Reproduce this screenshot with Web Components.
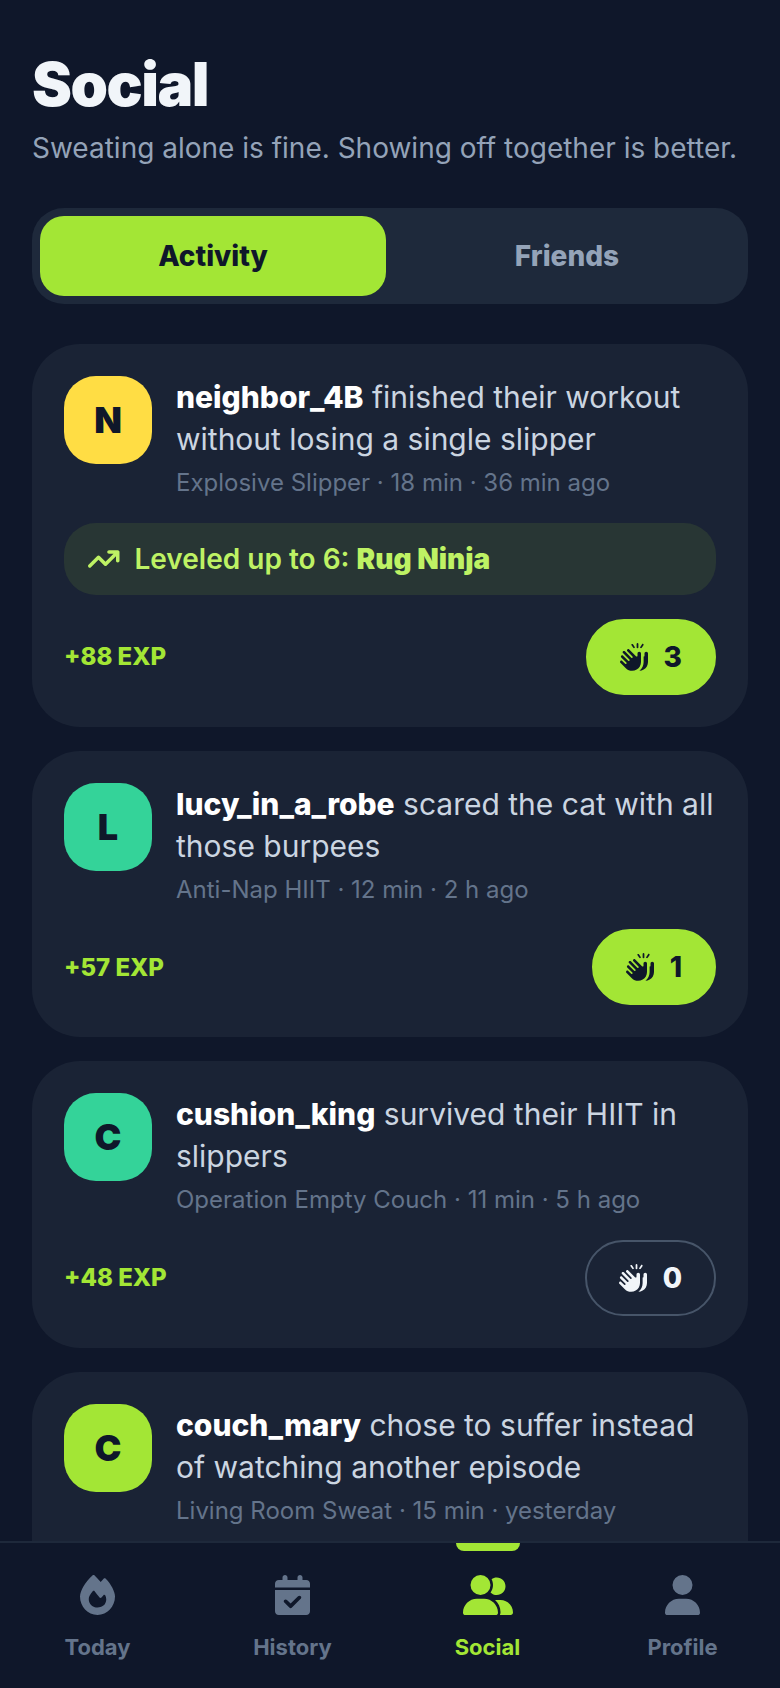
<!DOCTYPE html>
<html lang="en">
<head>
<meta charset="utf-8">
<title>Social</title>
<style>
  html, body { margin: 0; padding: 0; background: #0f172a; }
  body { font-family: Inter, "Liberation Sans", sans-serif; }
</style>
</head>
<body>
<app-shell>
  <page-header title="Social">Sweating alone is fine. Showing off together is better.</page-header>
  <seg-tabs></seg-tabs>
  <activity-card initial="N" tone="#ffdd44" exp="+88 EXP" claps="3" meta="Explosive Slipper · 18 min · 36 min ago">
    <b>neighbor_4B</b> finished their workout without losing a single slipper
    <level-badge slot="extra">Leveled up to 6: <b>Rug Ninja</b></level-badge>
  </activity-card>
  <activity-card initial="L" tone="#34d399" exp="+57 EXP" claps="1" meta="Anti-Nap HIIT · 12 min · 2 h ago">
    <b>lucy_in_a_robe</b> scared the cat with all those burpees
  </activity-card>
  <activity-card initial="C" tone="#34d399" exp="+48 EXP" claps="0" meta="Operation Empty Couch · 11 min · 5 h ago">
    <b>cushion_king</b> survived their HIIT in slippers
  </activity-card>
  <activity-card initial="C" tone="#a3e635" exp="+35 EXP" claps="0" meta="Living Room Sweat · 15 min · yesterday">
    <b>couch_mary</b> chose to suffer instead of watching another episode
  </activity-card>
  <bottom-nav slot="nav"></bottom-nav>
</app-shell>

<script>
const icons = {
  fire: ['0 0 448 512', 'M159.3 5.4c7.8-7.3 19.9-7.2 27.7 .1c27.6 25.9 53.5 53.8 77.7 84c11-14.4 23.5-30.1 37-42.9c7.9-7.4 20.1-7.4 28 .1c34.6 33 63.9 76.6 84.5 118c20.3 40.8 33.8 82.5 33.8 111.9C448 404.2 348.2 512 224 512C98.4 512 0 404.1 0 276.5c0-38.4 17.8-85.3 45.4-131.7C73.3 97.7 112.7 48.6 159.3 5.4zM225.7 416c25.3 0 47.7-7 68.8-21c42.1-29.4 53.4-88.2 28.1-134.4c-4.5-9-16-9.6-22.5-2l-25.2 29.3c-6.6 7.6-18.5 7.4-24.7-.5c-16.5-21-46-58.5-62.8-79.8c-6.3-8-18.3-8.1-24.7-.1c-33.8 42.5-50.8 69.3-50.8 99.4C112 375.4 162.6 416 225.7 416z'],
  calendar: ['0 0 448 512', 'M128 0c17.7 0 32 14.3 32 32V64H288V32c0-17.7 14.3-32 32-32s32 14.3 32 32V64h48c26.5 0 48 21.5 48 48v48H0V112C0 85.5 21.5 64 48 64H96V32c0-17.7 14.3-32 32-32zM0 192H448V464c0 26.5-21.5 48-48 48H48c-26.5 0-48-21.5-48-48V192zM329 305c9.4-9.4 9.4-24.6 0-33.9s-24.6-9.4-33.9 0l-95 95-47-47c-9.4-9.4-24.6-9.4-33.9 0s-9.4 24.6 0 33.9l64 64c9.4 9.4 24.6 9.4 33.9 0L329 305z'],
  group: ['0 0 640 512', 'M96 128a128 128 0 1 1 256 0A128 128 0 1 1 96 128zM0 482.3C0 383.8 79.8 304 178.3 304h91.4C368.2 304 448 383.8 448 482.3c0 16.4-13.3 29.7-29.7 29.7H29.7C13.3 512 0 498.7 0 482.3zM609.3 512H471.4c5.4-9.4 8.6-20.3 8.6-32v-8c0-60.7-27.1-115.2-69.8-151.8c2.4-.1 4.7-.2 7.1-.2h61.4C567.8 320 640 392.2 640 481.3c0 17-13.8 30.7-30.7 30.7zM432 256c-31 0-59-12.6-79.3-32.9C372.4 196.5 384 163.6 384 128c0-26.8-6.6-52.1-18.3-74.3C384.3 40.1 407.2 32 432 32c61.9 0 112 50.1 112 112s-50.1 112-112 112z'],
  user: ['0 0 448 512', 'M224 256A128 128 0 1 0 224 0a128 128 0 1 0 0 256zm-45.7 48C79.8 304 0 383.8 0 482.3C0 498.7 13.3 512 29.7 512H418.3c16.4 0 29.7-13.3 29.7-29.7C448 383.8 368.2 304 269.7 304H178.3z'],
  trend: ['0 0 576 512', 'M384 160c-17.7 0-32-14.3-32-32s14.3-32 32-32H544c17.7 0 32 14.3 32 32V288c0 17.7-14.3 32-32 32s-32-14.3-32-32V205.3L342.6 374.6c-12.5 12.5-32.8 12.5-45.3 0L192 269.3 54.6 406.6c-12.5 12.5-32.8 12.5-45.3 0s-12.5-32.8 0-45.3l160-160c12.5-12.5 32.8-12.5 45.3 0L320 306.7 466.7 160H384z'],
  clap: ['0 0 512 512', 'M336 16V80c0 8.8-7.2 16-16 16s-16-7.2-16-16V16c0-8.8 7.2-16 16-16s16 7.2 16 16zm-98.7 7.1l32 48c4.9 7.4 2.9 17.3-4.4 22.2s-17.3 2.9-22.2-4.4l-32-48c-4.9-7.4-2.9-17.3 4.4-22.2s17.3-2.9 22.2 4.4zM135 119c9.4-9.4 24.6-9.4 33.9 0L292.7 242.7c10.1 10.1 27.3 2.9 27.3-11.3V192c0-17.7 14.3-32 32-32s32 14.3 32 32V345.6c0 57.1-30 110-78.9 139.4c-64 38.4-145.8 28.3-198.5-24.4L7 361c-9.4-9.4-9.4-24.6 0-33.9s24.6-9.4 33.9 0l53 53c6.1 6.1 16 6.1 22.1 0s6.1-16 0-22.1L23 265c-9.4-9.4-9.4-24.6 0-33.9s24.6-9.4 33.9 0l93 93c6.1 6.1 16 6.1 22.1 0s6.1-16 0-22.1L55 185c-9.4-9.4-9.4-24.6 0-33.9s24.6-9.4 33.9 0l117 117c6.1 6.1 16 6.1 22.1 0s6.1-16 0-22.1l-93-93c-9.4-9.4-9.4-24.6 0-33.9zM433.1 484.9c-24.2 14.5-50.9 22.1-77.7 23.1c48.1-39.6 76.6-99 76.6-162.4l0-98.1c8.2-.1 16-6.4 16-16V192c0-17.7 14.3-32 32-32s32 14.3 32 32V345.6c0 57.1-30 110-78.9 139.4zM424.9 18.7c7.4 4.9 9.3 14.8 4.4 22.2l-32 48c-4.9 7.4-14.8 9.3-22.2 4.4s-9.3-14.8-4.4-22.2l32-48c4.9-7.4 14.8-9.3 22.2-4.4z'],
};

const icon = (name, height) => {
  const [box, d] = icons[name];
  return `<svg viewBox="${box}" height="${height}" fill="currentColor" aria-hidden="true"><path d="${d}"/></svg>`;
};

class AppShell extends HTMLElement {
  constructor() {
    super();
    this.attachShadow({ mode: 'open' }).innerHTML = `
      <style>
        :host {
          display: flex;
          flex-direction: column;
          width: 780px;
          height: 1688px;
          overflow: hidden;
          background: #0f172a;
        }
        main {
          flex: 1;
          min-height: 0;
          overflow: hidden;
          padding: 48px 32px 0;
          display: flex;
          flex-direction: column;
          gap: 24px;
        }
        ::slotted(seg-tabs) { margin: 16px 0; }
      </style>
      <main><slot></slot></main>
      <slot name="nav"></slot>
    `;
  }
}

class PageHeader extends HTMLElement {
  constructor() {
    super();
    this.attachShadow({ mode: 'open' }).innerHTML = `
      <style>
        :host { display: block; flex: none; }
        h1 {
          margin: 0 0 8px;
          font: 900 60px/72px Inter, sans-serif;
          letter-spacing: -1.5px;
          color: #f1f5f9;
        }
        p {
          margin: 0;
          font: 400 28px/40px Inter, sans-serif;
          color: #94a3b8;
          white-space: nowrap;
        }
      </style>
      <h1>${this.getAttribute('title')}</h1>
      <p><slot></slot></p>
    `;
  }
}

class SegTabs extends HTMLElement {
  constructor() {
    super();
    this.attachShadow({ mode: 'open' }).innerHTML = `
      <style>
        :host {
          display: grid;
          grid-template-columns: 1fr 1fr;
          gap: 8px;
          flex: none;
          height: 96px;
          box-sizing: border-box;
          padding: 8px;
          background: #1e293b;
          border-radius: 32px;
        }
        div {
          display: flex;
          align-items: center;
          justify-content: center;
          border-radius: 24px;
          font: 800 28px Inter, sans-serif;
          color: #94a3b8;
        }
        .on { background: #a3e635; color: #0f172a; }
      </style>
      <div class="on">Activity</div>
      <div>Friends</div>
    `;
  }
}

class LevelBadge extends HTMLElement {
  constructor() {
    super();
    this.attachShadow({ mode: 'open' }).innerHTML = `
      <style>
        :host {
          display: flex;
          align-items: center;
          gap: 15px;
          height: 72px;
          box-sizing: border-box;
          padding: 0 24px;
          border-radius: 32px;
          background: rgba(163, 230, 53, 0.1);
          color: #bef264;
          font: 600 28px Inter, sans-serif;
        }
        svg { flex: none; }
        ::slotted(b) { font-weight: 900; }
      </style>
      ${icon('trend', 28)}
      <span><slot></slot></span>
    `;
  }
}

class ClapButton extends HTMLElement {
  constructor() {
    super();
    const count = this.getAttribute('count');
    this.attachShadow({ mode: 'open' }).innerHTML = `
      <style>
        :host {
          display: inline-flex;
          align-items: center;
          gap: 16px;
          height: 76px;
          box-sizing: border-box;
          padding: 0 32px;
          border: 2px solid #a3e635;
          border-radius: 38px;
          font: 800 28px Inter, sans-serif;
          background: #a3e635;
          color: #0f172a;
        }
        :host([count="0"]) {
          background: transparent;
          border-color: #475569;
          color: #f1f5f9;
        }
      </style>
      ${icon('clap', 28)}
      <span>${count}</span>
    `;
  }
}

class ActivityCard extends HTMLElement {
  constructor() {
    super();
    this.attachShadow({ mode: 'open' }).innerHTML = `
      <style>
        :host {
          display: block;
          flex: none;
          padding: 32px;
          background: #1a2335;
          border-radius: 48px;
        }
        .head { display: flex; gap: 24px; }
        .avatar {
          flex: none;
          width: 88px;
          height: 88px;
          display: flex;
          align-items: center;
          justify-content: center;
          border-radius: 32px;
          font: 900 36px Inter, sans-serif;
          color: #0f172a;
          background: ${this.getAttribute('tone')};
        }
        .msg { font: 400 30px/42px Inter, sans-serif; color: #cbd5e1; }
        .msg ::slotted(b) { font-weight: 800; color: #fff; }
        .meta { margin-top: 8px; font: 400 24px/30.5px Inter, sans-serif; color: #64748b; }
        ::slotted(level-badge) { margin-top: 24px; }
        .foot {
          margin-top: 24px;
          display: flex;
          align-items: center;
          justify-content: space-between;
        }
        .exp { font: 800 24px Inter, sans-serif; color: #a3e635; }
      </style>
      <div class="head">
        <div class="avatar">${this.getAttribute('initial')}</div>
        <div>
          <div class="msg"><slot></slot></div>
          <div class="meta">${this.getAttribute('meta')}</div>
        </div>
      </div>
      <slot name="extra"></slot>
      <div class="foot">
        <span class="exp">${this.getAttribute('exp')}</span>
        <clap-button count="${this.getAttribute('claps')}"></clap-button>
      </div>
    `;
  }
}

class NavItem extends HTMLElement {
  constructor() {
    super();
    this.attachShadow({ mode: 'open' }).innerHTML = `
      <style>
        :host {
          display: flex;
          flex-direction: column;
          align-items: center;
          gap: 16px;
          padding-top: 32px;
          color: #64748b;
          font: 700 22px/32px Inter, sans-serif;
          position: relative;
        }
        :host([active]) { color: #a3e635; }
        :host([active])::before {
          content: "";
          position: absolute;
          top: 0;
          width: 64px;
          height: 8px;
          background: #a3e635;
          border-radius: 0 0 8px 8px;
        }
        svg { display: block; }
      </style>
      ${icon(this.getAttribute('icon'), 40)}
      <span><slot></slot></span>
    `;
  }
}

class BottomNav extends HTMLElement {
  constructor() {
    super();
    this.attachShadow({ mode: 'open' }).innerHTML = `
      <style>
        :host {
          display: grid;
          grid-template-columns: repeat(4, 1fr);
          flex: none;
          height: 147px;
          box-sizing: border-box;
          background: #0f172a;
          border-top: 2px solid #1e293b;
        }
      </style>
      <nav-item icon="fire">Today</nav-item>
      <nav-item icon="calendar">History</nav-item>
      <nav-item icon="group" active>Social</nav-item>
      <nav-item icon="user">Profile</nav-item>
    `;
  }
}

customElements.define('nav-item', NavItem);
customElements.define('bottom-nav', BottomNav);
customElements.define('clap-button', ClapButton);
customElements.define('level-badge', LevelBadge);
customElements.define('seg-tabs', SegTabs);
customElements.define('page-header', PageHeader);
customElements.define('activity-card', ActivityCard);
customElements.define('app-shell', AppShell);
</script>
</body>
</html>
